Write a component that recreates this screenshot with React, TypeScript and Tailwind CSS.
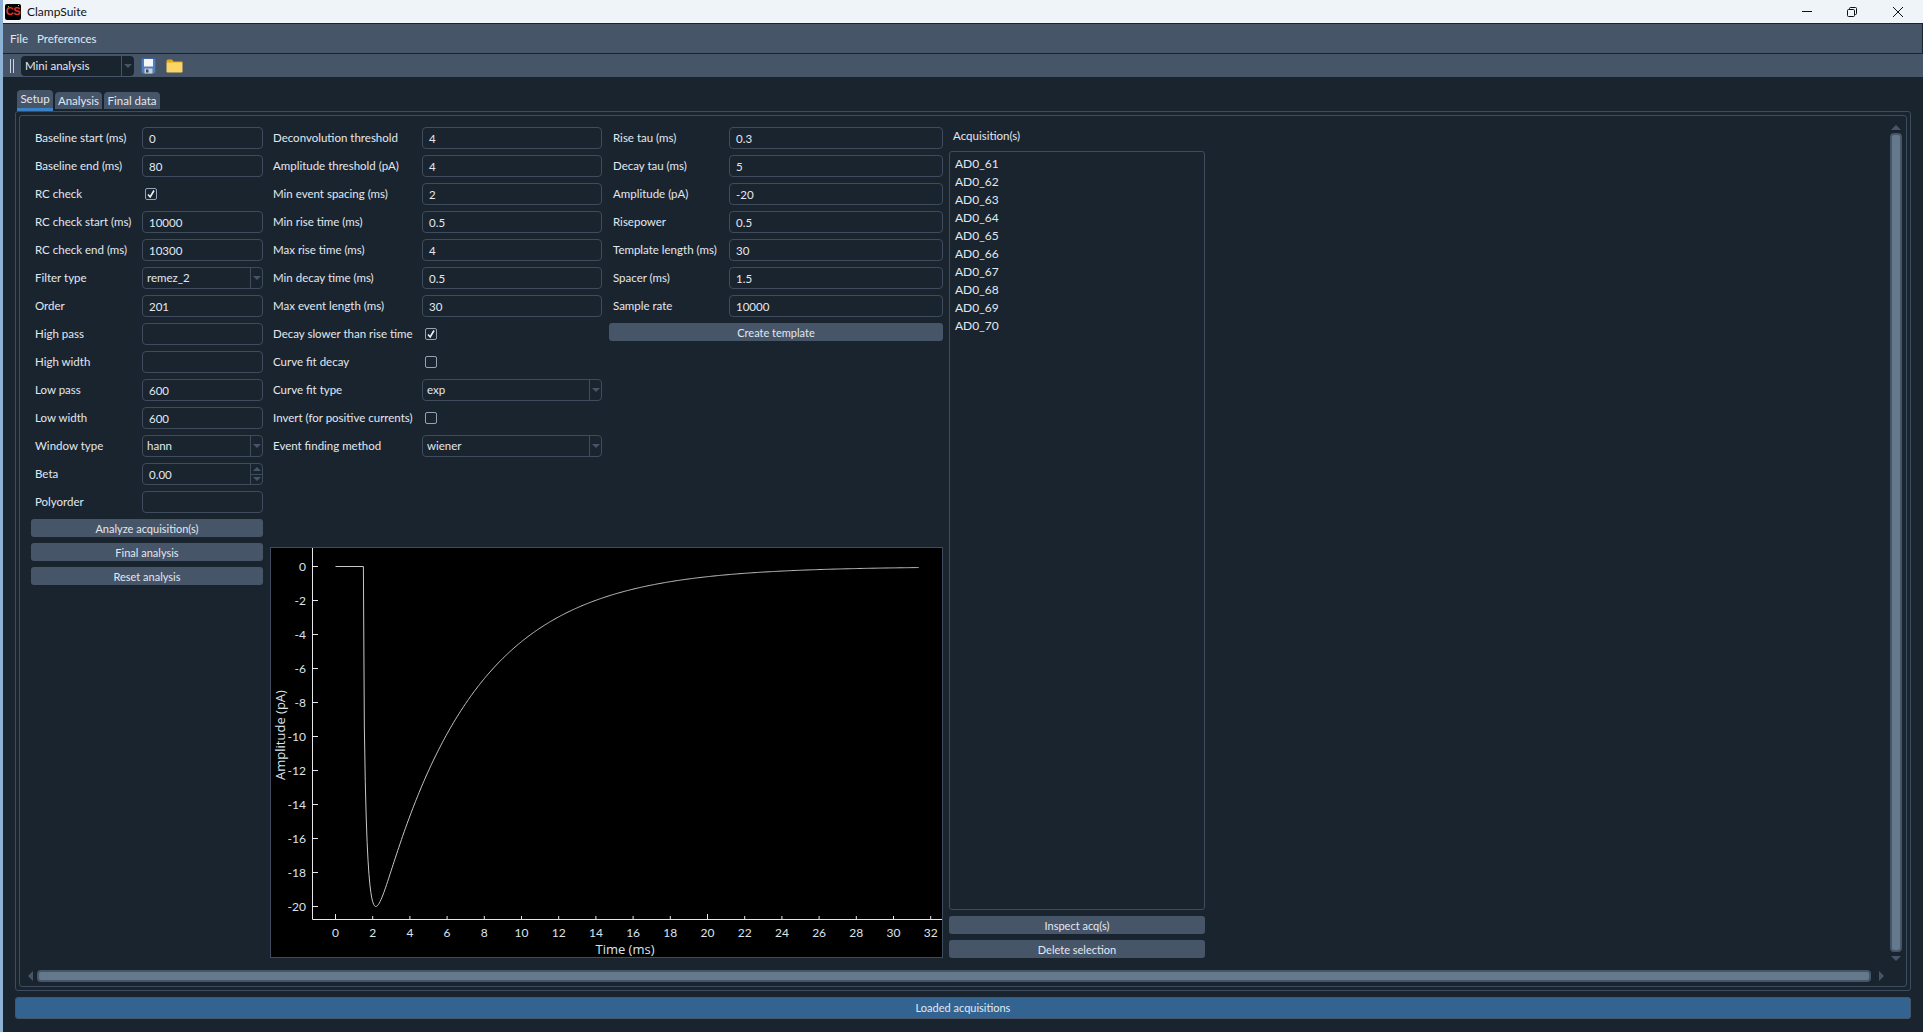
const UI_FONT = "font-['Lato','Open_Sans',sans-serif]";

type Field =
  | { label: string; kind: "input"; value?: string }
  | { label: string; kind: "check"; checked?: boolean }
  | { label: string; kind: "combo"; value: string }
  | { label: string; kind: "spin"; value: string };

const setupFields: Field[] = [
  { label: "Baseline start (ms)", kind: "input", value: "0" },
  { label: "Baseline end (ms)", kind: "input", value: "80" },
  { label: "RC check", kind: "check", checked: true },
  { label: "RC check start (ms)", kind: "input", value: "10000" },
  { label: "RC check end (ms)", kind: "input", value: "10300" },
  { label: "Filter type", kind: "combo", value: "remez_2" },
  { label: "Order", kind: "input", value: "201" },
  { label: "High pass", kind: "input" },
  { label: "High width", kind: "input" },
  { label: "Low pass", kind: "input", value: "600" },
  { label: "Low width", kind: "input", value: "600" },
  { label: "Window type", kind: "combo", value: "hann" },
  { label: "Beta", kind: "spin", value: "0.00" },
  { label: "Polyorder", kind: "input" },
];

const eventFields: Field[] = [
  { label: "Deconvolution threshold", kind: "input", value: "4" },
  { label: "Amplitude threshold (pA)", kind: "input", value: "4" },
  { label: "Min event spacing (ms)", kind: "input", value: "2" },
  { label: "Min rise time (ms)", kind: "input", value: "0.5" },
  { label: "Max rise time (ms)", kind: "input", value: "4" },
  { label: "Min decay time (ms)", kind: "input", value: "0.5" },
  { label: "Max event length (ms)", kind: "input", value: "30" },
  { label: "Decay slower than rise time", kind: "check", checked: true },
  { label: "Curve fit decay", kind: "check" },
  { label: "Curve fit type", kind: "combo", value: "exp" },
  { label: "Invert (for positive currents)", kind: "check" },
  { label: "Event finding method", kind: "combo", value: "wiener" },
];

const templateFields: Field[] = [
  { label: "Rise tau (ms)", kind: "input", value: "0.3" },
  { label: "Decay tau (ms)", kind: "input", value: "5" },
  { label: "Amplitude (pA)", kind: "input", value: "-20" },
  { label: "Risepower", kind: "input", value: "0.5" },
  { label: "Template length (ms)", kind: "input", value: "30" },
  { label: "Spacer (ms)", kind: "input", value: "1.5" },
  { label: "Sample rate", kind: "input", value: "10000" },
];

const acquisitions = ["AD0_61", "AD0_62", "AD0_63", "AD0_64", "AD0_65", "AD0_66", "AD0_67", "AD0_68", "AD0_69", "AD0_70"];

function SmallButton({ label }: { label: string }) {
  return (
    <div className="flex h-[18px] items-center justify-center rounded-[3px] bg-[#475569] text-[11px] leading-none text-[#e2e8f0]">
      {label}
    </div>
  );
}

function DownArrow() {
  return <div className="h-0 w-0 border-x-[4px] border-t-[4px] border-x-transparent border-t-[#475569]" />;
}

function FieldControl({ field }: { field: Field }) {
  if (field.kind === "check") {
    return (
      <div className="flex h-[22px] items-center pl-[3px]">
        <div className="flex h-[12px] w-[12px] items-center justify-center rounded-[2px] border border-[#94a3b8]">
          {field.checked && (
            <svg width="10" height="10" viewBox="0 0 10 10" fill="none">
              <path d="M2 5.5 L4.2 8 L8 1.5" stroke="#f1f5f9" strokeWidth="1.6" />
            </svg>
          )}
        </div>
      </div>
    );
  }
  if (field.kind === "combo") {
    return (
      <div className="flex h-[22px] flex-1 items-center rounded-[4px] border border-[#3f4c5d]">
        <span className="flex-1 pl-[4px] text-[11.5px] text-[#e2e8f0]">{field.value}</span>
        <div className="flex h-full w-[12px] items-center justify-center border-l border-[#3f4c5d]">
          <DownArrow />
        </div>
      </div>
    );
  }
  if (field.kind === "spin") {
    return (
      <div className="flex h-[22px] flex-1 items-center rounded-[4px] border border-[#3f4c5d]">
        <span className="flex-1 pt-[1px] pl-[6px] text-[11.5px] text-[#e2e8f0]">{field.value}</span>
        <div className="flex h-full w-[12px] flex-col border-l border-[#3f4c5d]">
          <div className="flex flex-1 items-center justify-center border-b border-[#3f4c5d]">
            <div className="h-0 w-0 border-x-[4px] border-b-[4px] border-x-transparent border-b-[#475569]" />
          </div>
          <div className="flex flex-1 items-center justify-center">
            <DownArrow />
          </div>
        </div>
      </div>
    );
  }
  return (
    <div className="flex h-[22px] flex-1 items-center rounded-[4px] border border-[#3f4c5d] pt-[1px] pl-[6px] text-[11.5px] text-[#e2e8f0]">
      {field.value}
    </div>
  );
}

function FieldRow({ field, labelClass }: { field: Field; labelClass: string }) {
  return (
    <div className="flex h-[22px] items-center">
      <div className={`${labelClass} shrink-0 whitespace-nowrap text-[11.5px] text-[#e2e8f0]`}>{field.label}</div>
      <FieldControl field={field} />
    </div>
  );
}

function templatePath() {
  // same formula the app plots: normalised rise * decay, shifted by the spacer
  const px = (ms: number) => 64.5 + ms * 18.6;
  const py = (pa: number) => 18.5 + pa * -17;
  const rise = 0.3;
  const decay = 5;
  const peakT = 0.67;
  const norm = Math.sqrt(1 - Math.exp(-peakT / rise)) * Math.exp(-peakT / decay);
  const pts: string[] = [`M${px(0)} ${py(0)}`, `L${px(1.5)} ${py(0)}`];
  for (let ms = 1.5; ms <= 31.4; ms += 0.05) {
    const t = ms - 1.5;
    const v = (-20 * Math.sqrt(1 - Math.exp(-t / rise)) * Math.exp(-t / decay)) / norm;
    pts.push(`L${px(ms).toFixed(2)} ${py(v).toFixed(2)}`);
  }
  return pts.join(" ");
}

function TemplatePlot() {
  const xTicks = Array.from({ length: 17 }, (_, i) => i * 2);
  const yTicks = Array.from({ length: 11 }, (_, i) => -i * 2);
  return (
    <div className="mt-auto h-[411px] border border-[#3f4c5d] bg-black">
      <svg width="671" height="409" viewBox="0 0 671 409" className="block">
        <line x1="41.5" y1="0" x2="41.5" y2="371.5" stroke="#e5e7eb" />
        <line x1="41.5" y1="371.5" x2="671" y2="371.5" stroke="#e5e7eb" />
        {yTicks.map((v) => (
          <g key={v}>
            <line x1="41.5" x2="47" y1={18.5 - v * 17} y2={18.5 - v * 17} stroke="#e5e7eb" />
            <text x="35" y={22.5 - v * 17} textAnchor="end" fontSize="12" fill="#dbe4ee" fontFamily="Lato, sans-serif">
              {v}
            </text>
          </g>
        ))}
        {xTicks.map((v) => (
          <g key={v}>
            <line x1={64.5 + v * 18.6} x2={64.5 + v * 18.6} y1={v === 0 || v === 20 ? 366 : 368} y2="371" stroke="#e5e7eb" />
            <text x={64.5 + v * 18.6} y="389" textAnchor="middle" fontSize="12" fill="#dbe4ee" fontFamily="Lato, sans-serif">
              {v}
            </text>
          </g>
        ))}
        <path d={templatePath()} fill="none" stroke="#c8c8c8" strokeWidth="1" />
        <text x="354" y="405.5" textAnchor="middle" fontSize="13" fill="#dbe4ee" fontFamily="Open Sans, sans-serif">
          Time (ms)
        </text>
        <text transform="translate(14 187) rotate(-90)" textAnchor="middle" fontSize="13" fill="#dbe4ee" fontFamily="Open Sans, sans-serif">
          Amplitude (pA)
        </text>
      </svg>
    </div>
  );
}

function WindowButtons() {
  return (
    <div className="flex items-center pr-[19px]">
      <svg width="12" height="12" viewBox="0 0 12 12" className="mr-[33px]">
        <line x1="1" y1="5.5" x2="11" y2="5.5" stroke="#111" />
      </svg>
      <svg width="12" height="12" viewBox="0 0 12 12" fill="none" className="mr-[34px]">
        <rect x="1.5" y="3.5" width="7" height="7" rx="1" stroke="#111" />
        <path d="M3.5 3.5 V2.5 Q3.5 1.5 4.5 1.5 H9.5 Q10.5 1.5 10.5 2.5 V7.5 Q10.5 8.5 9.5 8.5 H8.5" stroke="#111" />
      </svg>
      <svg width="12" height="12" viewBox="0 0 12 12" fill="none">
        <path d="M1 1 L11 11 M11 1 L1 11" stroke="#111" />
      </svg>
    </div>
  );
}

function AppLogo() {
  return (
    <div className="relative ml-[2px] flex h-[16px] w-[16px] items-center justify-center rounded-[2px] bg-black font-['Liberation_Sans',sans-serif] text-[11px] leading-none font-bold tracking-[-0.5px] text-[#e0352b]">
      CS
      <div className="absolute top-[2px] left-[3px] h-[1px] w-[1px] bg-[#7fc241]" />
      <div className="absolute top-[1px] right-[2px] h-[1px] w-[1px] bg-[#e6c23a]" />
    </div>
  );
}

function SaveIcon() {
  return (
    <svg width="15" height="16" viewBox="0 0 15 16">
      <rect x="0.5" y="0.5" width="14" height="15" rx="1.5" fill="#4f7fbd" stroke="#3d66a0" />
      <rect x="3" y="1" width="9" height="7.5" fill="#f4f6f8" />
      <rect x="3.5" y="10.5" width="8" height="5" fill="#c9d0d8" />
      <rect x="5" y="11.5" width="2.5" height="3" fill="#3a4a5c" />
    </svg>
  );
}

function FolderIcon() {
  return (
    <svg width="17" height="14" viewBox="0 0 17 14">
      <path d="M0.5 2 Q0.5 0.5 2 0.5 H6 L7.5 2.5 H16 Q16.5 2.5 16.5 3 V4 H0.5 Z" fill="#e2a917" />
      <rect x="0.5" y="3.5" width="16" height="10" rx="1" fill="#fbd565" />
    </svg>
  );
}

export default function App() {
  return (
    <div className={`flex h-[1032px] w-full overflow-hidden bg-[#1a242f] ${UI_FONT}`}>
      <div className="w-[3px] shrink-0 bg-[#8db2d3]" />
      <div className="flex min-w-0 flex-1 flex-col">
        <div className="flex h-[23px] items-center justify-between bg-[#eff4f9]">
          <div className="flex items-center gap-[6px]">
            <AppLogo />
            <span className="text-[12px] text-[#111]">ClampSuite</span>
          </div>
          <WindowButtons />
        </div>

        <div className="flex h-[31px] items-center gap-[9px] border-y border-r border-[#1a242f] bg-[#475569] pl-[7px] text-[11.5px] text-[#e2e8f0]">
          <span>File</span>
          <span>Preferences</span>
        </div>

        <div className="flex h-[23px] items-center bg-[#475569] pl-[7px]">
          <div className="h-[14px] w-[4px] border-x border-[#cbd5e1]" />
          <div className="ml-[7px] flex h-[20px] w-[113px] items-center rounded-[4px] bg-[#1a242f]">
            <span className="flex-1 pl-[4px] text-[11.5px] text-[#e2e8f0]">Mini analysis</span>
            <div className="flex h-full w-[13px] items-center justify-center border-l border-[#475569]">
              <DownArrow />
            </div>
          </div>
          <div className="ml-[7px] flex items-center gap-[10px]">
            <SaveIcon />
            <FolderIcon />
          </div>
        </div>

        <div className="flex h-[34px] items-start gap-[2px] pl-[14px] text-[11.5px] text-[#e2e8f0]">
          <div className="mt-[13px] flex h-[21px] w-[36px] items-center justify-center rounded-t-[4px] border-b-[3px] border-[#3b82c4] bg-[#475569]">
            Setup
          </div>
          <div className="mt-[15px] flex h-[17px] w-[47px] items-center justify-center rounded-t-[4px] bg-[#475569]">
            Analysis
          </div>
          <div className="mt-[15px] flex h-[17px] w-[56px] items-center justify-center rounded-t-[4px] bg-[#475569]">
            Final data
          </div>
        </div>

        <div className="mx-[12px] flex h-[880px] flex-col rounded-[3px] border border-[#3f4c5d] p-[3px]">
          <div className="flex min-h-0 flex-1 flex-col rounded-[3px] border border-[#3f4c5d]">
            <div className="flex min-h-0 flex-1">
              <div className="flex flex-1 gap-[6px] pt-[11px] pb-[12px] pl-[11px]">
                <div className="mr-[1px] flex w-[232px] flex-col gap-[6px]">
                  {setupFields.map((f) => (
                    <FieldRow key={f.label} field={f} labelClass="w-[111px] pl-[4px]" />
                  ))}
                  <SmallButton label="Analyze acquisition(s)" />
                  <SmallButton label="Final analysis" />
                  <SmallButton label="Reset analysis" />
                </div>

                <div className="flex w-[673px] flex-col">
                  <div className="flex gap-[7px]">
                    <div className="flex w-[332px] flex-col gap-[6px]">
                      {eventFields.map((f) => (
                        <FieldRow key={f.label} field={f} labelClass="w-[152px] pl-[3px]" />
                      ))}
                    </div>
                    <div className="flex w-[334px] flex-col gap-[6px]">
                      {templateFields.map((f) => (
                        <FieldRow key={f.label} field={f} labelClass="w-[120px] pl-[4px]" />
                      ))}
                      <SmallButton label="Create template" />
                    </div>
                  </div>
                  <TemplatePlot />
                </div>

                <div className="flex w-[256px] flex-col">
                  <div className="h-[24px] pl-[4px] text-[11.5px] leading-[18px] text-[#e2e8f0]">Acquisition(s)</div>
                  <div className="flex flex-1 flex-col rounded-[3px] border border-[#3f4c5d] pt-[3px] pl-[5px]">
                    {acquisitions.map((a) => (
                      <div key={a} className="h-[18px] text-[12px] leading-[18px] text-[#e2e8f0]">
                        {a}
                      </div>
                    ))}
                  </div>
                  <div className="mt-[6px] flex flex-col gap-[6px]">
                    <SmallButton label="Inspect acq(s)" />
                    <SmallButton label="Delete selection" />
                  </div>
                </div>
              </div>

              <div className="mr-[4px] flex w-[12px] flex-col items-center pt-[9px] pb-[9px]">
                <div className="h-0 w-0 border-x-[5px] border-b-[5px] border-x-transparent border-b-[#475569]" />
                <div className="mt-[3px] w-[12px] flex-1 rounded-[4px] border-2 border-[#475569] bg-[#64798b]" />
                <div className="mt-[4px] h-0 w-0 border-x-[5px] border-t-[5px] border-x-transparent border-t-[#475569]" />
              </div>
            </div>

            <div className="mb-[4px] flex h-[12px] items-center pr-[22px] pl-[8px]">
              <div className="h-0 w-0 border-y-[5px] border-r-[5px] border-y-transparent border-r-[#475569]" />
              <div className="mx-[4px] h-[12px] flex-1 rounded-[4px] border-2 border-[#475569] bg-[#64798b]" />
              <div className="ml-[4px] h-0 w-0 border-y-[5px] border-l-[5px] border-y-transparent border-l-[#475569]" />
            </div>
          </div>
        </div>

        <div className="mx-[12px] mt-[6px] flex h-[22px] items-center justify-center rounded-[3px] border border-[#475569] bg-[#336491] text-[11px] text-[#e2e8f0]">
          Loaded acquisitions
        </div>
      </div>
    </div>
  );
}
